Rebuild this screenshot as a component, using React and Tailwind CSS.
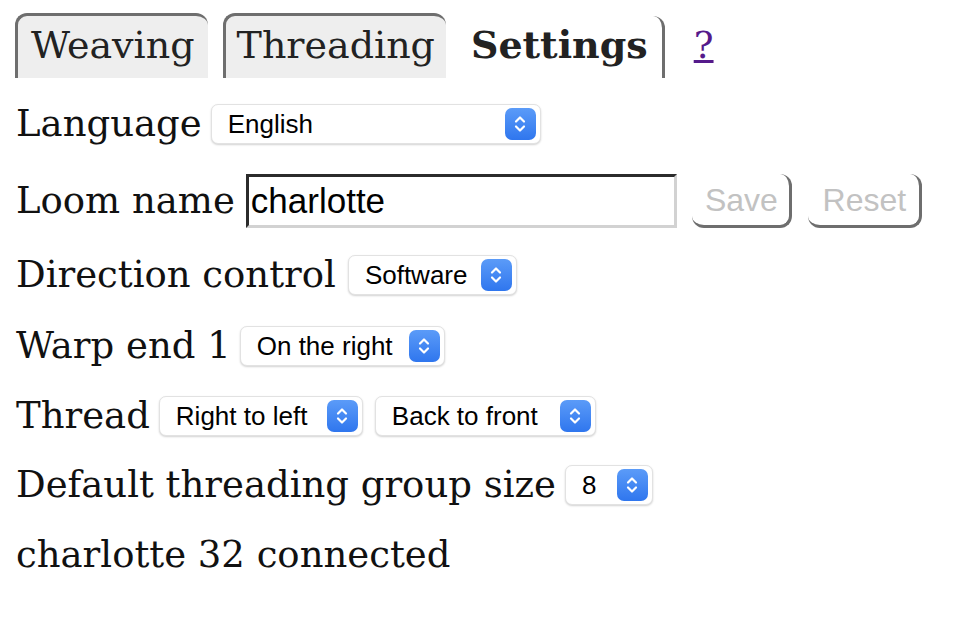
import React from 'react';

const serif = { fontFamily: '"DejaVu Serif", "Liberation Serif", serif' };
const sans = { fontFamily: '"Liberation Sans", Arial, sans-serif' };

const Stepper = () => (
  <span className="flex h-[32px] w-[31px] shrink-0 items-center justify-center rounded-[7px] bg-gradient-to-b from-[#5b9bf8] to-[#2f76ee]">
    <svg width="14" height="22" viewBox="0 0 14 22" fill="none">
      <path d="M3 8.5 L7 4.5 L11 8.5" stroke="white" strokeWidth="2.2" strokeLinecap="round" strokeLinejoin="round" />
      <path d="M3 13.5 L7 17.5 L11 13.5" stroke="white" strokeWidth="2.2" strokeLinecap="round" strokeLinejoin="round" />
    </svg>
  </span>
);

const Select = ({ value, width }) => (
  <div
    className="flex h-[40px] items-center justify-between rounded-[7px] border border-[#e2e2e2] bg-white pl-[16px] pr-[4px] text-[26px] text-black shadow-[0_1px_2px_rgba(0,0,0,0.18)]"
    style={{ width, ...sans }}
  >
    <span className="leading-none">{value}</span>
    <Stepper />
  </div>
);

const Row = ({ label, children, className = '' }) => (
  <div className={`flex items-center gap-[9px] ${className}`}>
    <span className="text-[37px] leading-[40px] text-[#111]">{label}</span>
    {children}
  </div>
);

export default function App() {
  return (
    <div className="min-h-screen bg-white pl-[15px] text-[#222]" style={serif}>
      <div className="flex items-end gap-[15px] pt-[13px]">
        <div className="h-[65px] rounded-t-[12px] border-l-[3px] border-t-[3px] border-[#6e6e6e] bg-[#eeeeee] px-[13px] text-[38px] leading-[58px]">
          Weaving
        </div>
        <div className="h-[65px] rounded-t-[12px] border-l-[3px] border-t-[3px] border-[#6e6e6e] bg-[#eeeeee] px-[11px] text-[38px] leading-[58px]">
          Threading
        </div>
        <div className="-ml-[4px] h-[62px] rounded-tr-[12px] border-r-[3px] border-[#6e6e6e] px-[14px] text-[38px] font-bold leading-[58px]">
          Settings
        </div>
        <a href="#" className="mb-[12px] ml-[14px] text-[37px] leading-[40px] text-[#551a8b] underline">?</a>
      </div>

      <div className="pl-[1px]">
        <Row label="Language" className="mt-[26px]">
          <Select value="English" width={330} />
        </Row>

        <Row label="Loom name" className="mt-[30px] gap-[11px]">
          <input
            readOnly
            value="charlotte"
            className="h-[54px] w-[431px] border-[3px] border-b-[#d2d2d2] border-l-[#2b2b2b] border-r-[#d2d2d2] border-t-[#2b2b2b] bg-white px-[2px] text-[35px] text-black outline-none"
            style={sans}
          />
          <div className="ml-[4px] flex gap-[16px]" style={sans}>
            <button className="h-[54px] w-[100px] rounded-[12px] border-b-[3px] border-r-[3px] border-[#6e6e6e] pl-[2px] text-[32px] text-[#c2c2c2]">
              Save
            </button>
            <button className="h-[54px] w-[114px] rounded-[12px] border-b-[3px] border-r-[3px] border-[#6e6e6e] pl-[2px] text-[32px] text-[#c2c2c2]">
              Reset
            </button>
          </div>
        </Row>

        <Row label="Direction control" className="mt-[27px] gap-[12px]">
          <Select value="Software" width={169} />
        </Row>

        <Row label="Warp end 1" className="mt-[31px]">
          <Select value="On the right" width={205} />
        </Row>

        <Row label="Thread" className="mt-[30px]">
          <div className="flex gap-[12px]">
            <Select value="Right to left" width={204} />
            <Select value="Back to front" width={221} />
          </div>
        </Row>

        <Row label="Default threading group size" className="mt-[29px]">
          <Select value="8" width={88} />
        </Row>

        <div className="mt-[30px] text-[37px] leading-[40px] text-[#111]">charlotte 32 connected</div>
      </div>
    </div>
  );
}
